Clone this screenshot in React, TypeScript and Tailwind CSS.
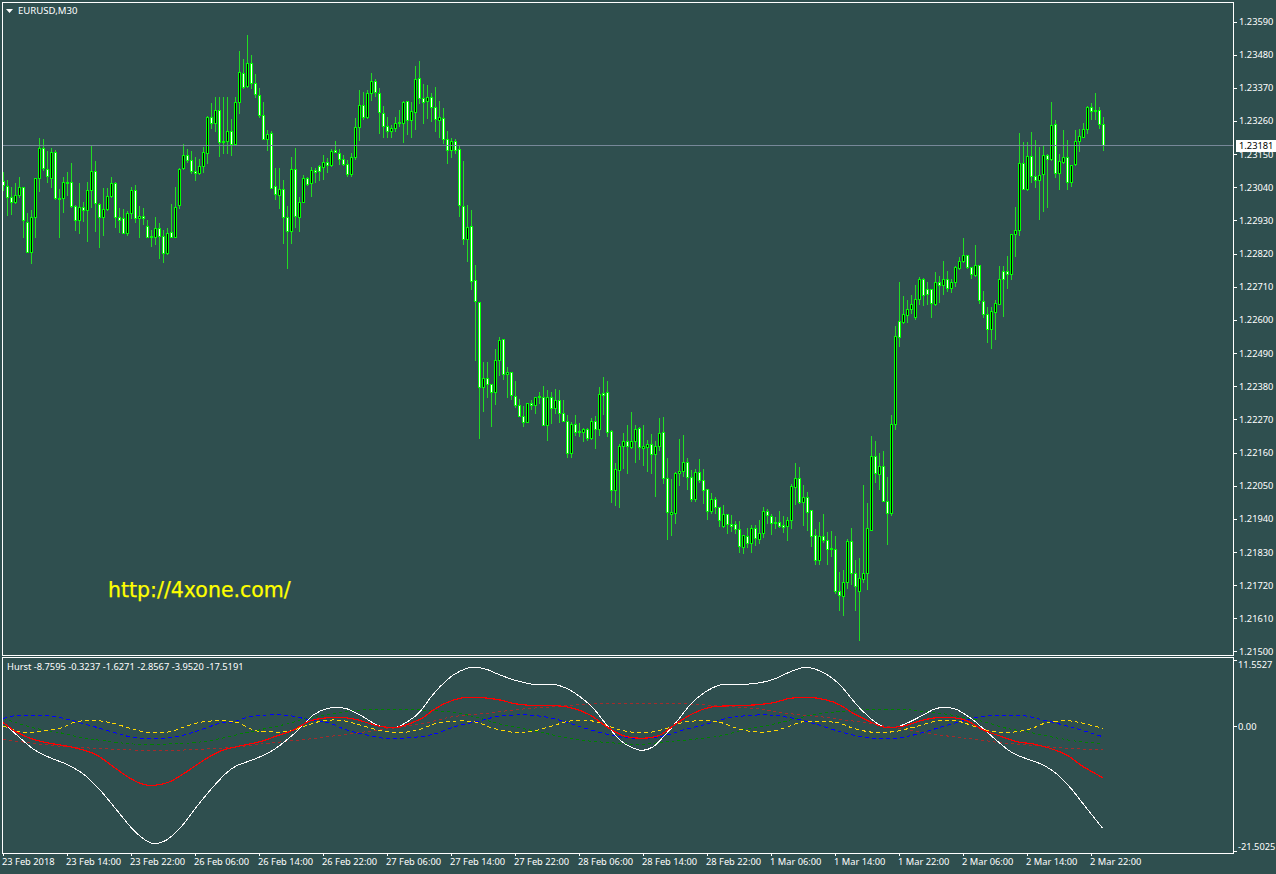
type Candle = [number, number, number, number, number];

// [wick top, wick bottom, body top, body bottom, 1 = rising], read at 3x, offset per group
const GROUP_A: Candle[] = [
  [515,570,543,555,0],[540,645,557,592,0],[560,642,592,607,0],[550,610,584,607,1],[532,590,562,584,1],
  [562,712,562,661,0],[640,757,665,755,0],[630,788,650,757,1],[535,710,535,650,1],[415,572,445,535,1],
  [417,510,445,505,0],[453,545,508,527,0],[445,560,457,535,1],[450,597,455,595,0],[568,712,595,597,0],
  [530,635,545,595,1],[517,585,545,548,0],[490,620,545,619,0],[615,690,617,661,0],[548,700,622,661,1],
  [605,662,620,631,0],[545,722,569,631,1],[437,620,512,569,1],[484,692,512,610,0],[610,740,612,652,0],
  [565,705,628,652,1],[565,630,589,628,1],[530,590,550,587,1],[547,680,548,652,0],[625,695,652,659,0],
  [628,700,655,700,0],[632,705,640,700,1],[560,655,569,640,1],[555,665,569,655,0],[618,710,647,655,1],
  [625,672,647,655,0],[660,710,677,710,0],[690,738,708,712,0],[652,732,683,712,1],[670,775,683,709,0],
  [690,785,709,760,0],[685,762,700,760,1],[612,712,697,712,0],[560,712,620,712,1],[505,625,508,616,1],
  [432,508,466,505,1],[447,485,466,481,0],[452,520,481,512,0],[470,540,512,518,0],[478,522,497,518,1],
  [440,515,455,497,1],[348,490,352,458,1],[308,385,352,370,0],[292,392,331,370,1],[292,467,331,427,0],
  [292,458,424,427,0],[292,458,394,424,1],[358,465,394,431,0],[292,433,307,433,1],[153,340,217,307,1],
  [178,265,220,260,0],[105,262,190,257,1],[165,265,190,248,0],[222,290,250,283,0],[265,350,284,346,0],
  [307,418,346,418,0],[390,450,403,418,1],[393,565,400,565,0],[505,597,559,581,0],[505,625,568,584,1],
  [540,728,568,652,0],[617,805,652,692,0],[470,728,508,692,1],[445,680,508,647,0],[590,692,607,650,1],
  [525,605,535,605,1],[530,555,535,553,0],[500,587,511,550,1],[505,547,511,515,0],[495,540,499,512,0],
];
const GROUP_B: Candle[] = [
  [345,416,367,380,1],[353,395,367,374,0],[327,378,334,374,1],[303,335,331,335,0],[327,372,340,356,0],
  [345,374,356,371,0],[360,408,371,401,0],[339,407,352,401,1],[235,357,262,352,1],[150,300,196,262,1],
  [156,237,196,232,0],[150,233,160,232,1],[98,180,124,160,1],[117,167,124,157,0],[145,278,160,217,0],
  [198,290,218,259,0],[232,290,259,272,0],[255,292,265,272,1],[232,272,250,265,1],[210,257,247,250,0],
  [183,305,187,248,1],[183,282,184,241,0],[187,290,214,241,1],[78,266,118,217,1],[63,188,115,175,0],
  [132,248,175,187,0],[135,233,172,184,1],[160,242,172,202,0],[140,272,202,238,0],[183,290,232,241,1],
  [205,308,235,296,0],[273,368,296,329,0],[295,350,304,329,1],[297,338,304,331,0],[318,527,328,496,0],
  [363,611,499,598,0],[495,662,562,598,1],[510,746,559,724,0],[675,960,721,784,0],
];
const GROUP_C: Candle[] = [
  [6,413,7,260,0],[187,332,235,260,1],[187,292,235,253,0],[253,377,253,277,0],[148,312,179,275,1],
  [111,224,121,179,1],[118,237,118,223,0],[202,292,217,223,1],[217,296,217,286,0],[244,322,287,314,0],
  [297,347,314,347,0],[318,378,347,365,0],[310,365,310,365,1],[300,327,310,314,0],[290,340,292,314,1],
  [277,310,289,292,0],[259,376,290,374,0],[271,419,292,374,1],[277,368,290,325,0],[267,340,301,325,1],
  [271,365,301,340,0],[300,362,340,362,0],[345,470,362,460,0],[365,470,373,460,1],[345,405,373,395,0],
  [370,408,393,396,0],[384,422,388,395,1],[385,420,388,413,0],[354,417,364,413,1],[348,445,364,386,0],
  [262,405,283,386,1],[232,342,280,285,0],[244,407,277,397,0],[390,605,394,571,0],[490,615,508,571,1],
  [432,620,439,511,1],[400,503,424,439,1],[376,518,424,439,0],[336,445,424,440,1],[376,485,388,424,1],
  [380,476,385,442,0],[375,495,439,445,1],[420,512,433,440,1],[403,518,431,463,0],[423,587,439,463,1],
  [354,450,400,439,1],[351,550,397,535,0],[475,716,535,637,0],[537,705,637,643,1],[515,668,520,640,1],
  [417,555,512,520,1],[405,528,485,512,1],[475,566,485,530,0],[510,603,530,598,0],[507,603,517,598,1],
  [477,545,517,541,0],[507,608,541,571,0],[568,656,568,634,0],[580,640,598,634,1],[590,640,598,622,0],
  [620,677,622,661,0],[615,680,643,679,1],[643,698,643,673,0],[645,692,673,677,0],[663,700,673,686,0],
  [663,755,688,739,0],[705,758,706,742,1],[685,740,707,730,0],[675,755,685,730,1],[675,735,685,715,0],
  [660,730,700,718,1],[622,712,634,700,1],[628,668,634,646,0],[643,701,649,668,0],[652,685,666,669,0],
  [633,680,667,677,0],[648,695,676,680,0],
];
const GROUP_D: Candle[] = [
  [472,540,481,497,1],[372,503,379,481,1],[310,431,355,382,1],[321,430,355,427,0],[375,495,412,425,1],
  [396,510,412,455,0],[450,558,451,529,0],[507,611,526,599,0],[487,611,529,599,1],[462,545,529,539,0],
  [517,611,539,566,0],[513,587,565,568,0],[528,698,568,692,0],[637,750,692,704,0],[630,765,667,707,1],
  [537,684,544,667,1],[504,672,544,640,0],[600,750,640,677,0],[595,840,655,692,1],[375,665,640,656,1],
  [430,687,505,640,1],[228,510,289,509,1],[243,366,289,338,0],[279,387,319,341,1],[273,423,319,422,0],
  [351,552,424,458,0],[165,465,193,458,1],
];
const GROUP_E: Candle[] = [
  [738,1047,769,1032,1],[606,797,724,772,0],[648,730,703,725,1],[660,727,688,704,1],[645,700,673,686,1],
  [615,717,658,710,1],[590,672,598,658,1],[594,675,598,646,0],[606,672,628,643,0],[630,710,628,668,0],
  [575,675,607,671,1],[588,665,607,616,0],[544,642,596,616,1],[573,632,596,625,0],[597,637,607,625,1],
  [558,617,562,607,1],[530,568,544,563,1],[475,545,526,542,1],[525,565,526,562,0],[562,595,562,583,0],
  [495,588,556,585,1],[555,668,556,661,0],[633,712,664,703,0],[682,786,703,748,0],[680,803,694,748,1],
  [660,776,670,697,1],[558,672,598,671,1],[558,708,574,598,0],[528,623,574,583,0],[462,597,463,583,1],
  [380,527,451,463,1],[160,465,250,451,1],[186,328,250,328,0],[186,330,229,328,1],[156,305,229,289,0],
  [180,320,289,301,0],[200,418,286,301,1],[196,392,226,283,1],[222,380,226,238,0],[66,240,136,238,1],
  [120,292,133,280,0],[222,326,244,280,1],[150,250,232,247,1],[180,326,232,307,0],[255,318,256,307,1],
  [150,255,184,253,1],[148,212,169,184,1],[128,170,148,170,1],[78,158,82,148,1],[70,118,82,92,0],
  [40,118,90,92,0],[80,143,91,133,0],[110,210,133,196,0],
];

const toScreen = (rows: Candle[], offset: number) =>
  rows.map((c) => ({
    hi: Math.round(offset + c[0] / 3),
    lo: Math.round(offset + c[1] / 3),
    top: Math.round(offset + c[2] / 3),
    bot: Math.round(offset + c[3] / 3),
    up: c[4] === 1,
  }));

const CANDLES = [
  ...toScreen(GROUP_A, 0),
  ...toScreen(GROUP_B, 40),
  ...toScreen(GROUP_C, 300),
  ...toScreen(GROUP_D, 360),
  ...toScreen(GROUP_E, 80),
];

const PRICES = [
  "1.23590","1.23480","1.23370","1.23260","1.23150","1.23040","1.22930","1.22820","1.22710","1.22600",
  "1.22490","1.22380","1.22270","1.22160","1.22050","1.21940","1.21830","1.21720","1.21610","1.21500",
];

const DATES = [
  "23 Feb 2018","23 Feb 14:00","23 Feb 22:00","26 Feb 06:00","26 Feb 14:00","26 Feb 22:00",
  "27 Feb 06:00","27 Feb 14:00","27 Feb 22:00","28 Feb 06:00","28 Feb 14:00","28 Feb 22:00",
  "1 Mar 06:00","1 Mar 14:00","1 Mar 22:00","2 Mar 06:00","2 Mar 14:00","2 Mar 22:00",
];

type Pt = [number, number];

// curve points come in three groups, one per 420px stretch of the indicator window
const join = (a: Pt[], b: Pt[], c: Pt[]): Pt[] => [
  ...a.map(([x, y]): Pt => [x / 3, 650 + y / 3]),
  ...b.slice(1).map(([x, y]): Pt => [420 + x / 3, 650 + y / 3]),
  ...c.slice(1).map(([x, y]): Pt => [840 + x / 3, 650 + y / 3]),
];

const WHITE = join(
  [[10,218],[50,255],[100,297],[150,323],[200,343],[250,372],[300,420],[350,480],[400,540],[440,573],[465,581],[500,570],[540,535],[590,470],[640,410],[680,368],[710,347],[770,325],[820,300],[860,270],[900,235],[940,195],[985,175],[1035,175],[1080,195],[1130,225],[1160,232],[1190,232],[1230,210],[1260,185]],
  [[0,185],[30,145],[60,110],[100,75],[140,55],[165,52],[200,58],[240,75],[290,92],[340,103],[400,103],[440,115],[480,140],[520,175],[560,225],[600,270],[630,290],[665,301],[700,290],[735,255],[770,215],[810,165],[850,130],[900,105],[960,103],[1010,100],[1060,88],[1100,70],[1140,55],[1165,52],[1200,63],[1230,80],[1260,105]],
  [[0,108],[30,140],[60,175],[100,212],[135,232],[165,232],[200,220],[250,195],[290,175],[340,175],[370,190],[400,210],[440,245],[480,280],[520,310],[570,330],[610,345],[650,372],[690,412],[730,462],[760,500],[788,535]],
);
const RED = join(
  [[10,218],[50,247],[100,268],[150,280],[200,288],[250,300],[290,315],[340,350],[390,385],[430,403],[465,406],[510,395],[560,365],[620,325],[670,300],[720,288],[780,275],[830,258],[880,240],[930,213],[985,203],[1035,203],[1075,210],[1130,227],[1165,232],[1200,230],[1260,208]],
  [[0,205],[40,180],[80,158],[130,143],[190,143],[240,150],[290,162],[350,167],[410,167],[460,175],[510,195],[560,230],[610,257],[665,265],[720,255],[770,220],[820,190],[870,172],[930,167],[1000,165],[1060,158],[1110,145],[1165,142],[1220,150],[1260,165]],
  [[0,168],[40,190],[90,215],[135,232],[190,228],[250,210],[290,203],[340,203],[380,212],[430,240],[480,258],[530,275],[580,282],[630,295],[680,315],[730,350],[788,383]],
);
const BLUE = join(
  [[10,205],[50,197],[140,197],[190,205],[240,218],[300,235],[350,250],[400,262],[470,266],[540,258],[600,240],[660,220],[700,215],[750,200],[800,195],[870,197],[930,210],[990,220],[1040,240],[1100,255],[1170,266],[1260,260]],
  [[0,260],[50,250],[110,228],[170,215],[230,200],[290,195],[350,197],[410,208],[480,230],[550,250],[610,262],[670,265],[730,258],[790,240],[850,225],[920,205],[980,197],[1050,195],[1120,205],[1180,220],[1260,245]],
  [[0,245],[50,257],[110,265],[180,263],[240,250],[300,232],[360,215],[420,200],[480,196],[550,197],[610,210],[670,225],[730,242],[788,260]],
);
const YELLOW = join(
  [[10,228],[50,243],[90,247],[130,243],[180,235],[230,215],[290,212],[340,220],[390,235],[440,247],[500,247],[550,232],[600,217],[660,212],[710,217],[760,240],[800,245],[860,245],[910,230],[970,212],[1030,212],[1090,228],[1150,243],[1210,247],[1260,238]],
  [[0,238],[50,220],[110,213],[170,217],[220,235],[280,247],[330,245],[390,230],[440,215],[490,210],[540,218],[590,237],[640,247],[690,247],[740,235],[790,217],[850,212],[900,217],[950,235],[1000,245],[1050,245],[1100,232],[1150,215],[1220,215],[1260,220]],
  [[0,220],[40,235],[100,247],[160,245],[220,232],[290,213],[350,213],[400,228],[450,243],[510,247],[570,237],[620,218],[680,212],[730,220],[788,235]],
);
const GREEN = join(
  [[10,205],[60,222],[120,238],[180,248],[240,262],[310,272],[400,282],[500,282],[580,278],[650,268],[730,250],[800,235],[860,222],[920,205],[980,195],[1060,182],[1130,178],[1260,180]],
  [[0,180],[60,183],[120,190],[180,205],[240,222],[320,238],[400,255],[480,270],[570,278],[660,283],[740,275],[820,268],[900,258],[970,240],[1050,225],[1120,208],[1200,190],[1260,185]],
  [[0,180],[80,178],[180,178],[240,183],[300,190],[350,198],[420,212],[500,235],[560,245],[640,262],[720,275],[788,280]],
);
const BROWN = join(
  [[10,268],[100,280],[200,290],[350,298],[470,302],[600,298],[700,292],[800,280],[900,270],[1000,258],[1100,245],[1260,222]],
  [[0,218],[100,200],[200,190],[300,178],[400,170],[500,163],[600,160],[700,160],[800,162],[900,168],[1000,175],[1100,190],[1200,200],[1260,208]],
  [[0,212],[90,220],[180,235],[260,250],[340,260],[420,270],[500,280],[600,288],[700,296],[788,299]],
);

// catmull-rom through the read points
function smooth(pts: Pt[]) {
  let d = `M${pts[0][0]} ${pts[0][1]}`;
  for (let i = 0; i < pts.length - 1; i++) {
    const p0 = pts[Math.max(i - 1, 0)];
    const p1 = pts[i];
    const p2 = pts[i + 1];
    const p3 = pts[Math.min(i + 2, pts.length - 1)];
    const c1x = p1[0] + (p2[0] - p0[0]) / 6;
    const c1y = p1[1] + (p2[1] - p0[1]) / 6;
    const c2x = p2[0] - (p3[0] - p1[0]) / 6;
    const c2y = p2[1] - (p3[1] - p1[1]) / 6;
    d += `C${c1x.toFixed(1)} ${c1y.toFixed(1)} ${c2x.toFixed(1)} ${c2y.toFixed(1)} ${p2[0].toFixed(1)} ${p2[1].toFixed(1)}`;
  }
  return d;
}

function CandleChart() {
  return (
    <svg className="block w-[1230px] h-[652px]" viewBox="3 3 1230 652" shapeRendering="crispEdges">
      {CANDLES.map((c, i) => {
        const x = 3 + 4 * i;
        const h = Math.max(c.bot - c.top + 1, 2);
        return (
          <g key={i}>
            <rect x={x} y={c.hi} width={1} height={c.lo - c.hi + 1} fill="#22dd22" />
            <rect x={x - 1} y={c.top} width={3} height={h} fill="#00ff00" />
            {h > 2 && <rect x={x} y={c.top + 1} width={1} height={h - 2} fill={c.up ? "#000000" : "#ffffff"} />}
          </g>
        );
      })}
      <rect x={3} y={145} width={1230} height={1} fill="#778899" />
    </svg>
  );
}

function HurstChart() {
  return (
    <svg className="block w-[1230px] h-[195px]" viewBox="3 658 1230 195" fill="none" shapeRendering="crispEdges">
      <path d={smooth(BROWN)} stroke="#a52a2a" strokeDasharray="3 3" />
      <path d={smooth(GREEN)} stroke="#008000" strokeDasharray="3 3" />
      <path d={smooth(BLUE)} stroke="#0000ff" strokeDasharray="4 3" />
      <path d={smooth(YELLOW)} stroke="#ffd700" strokeDasharray="4 3" />
      <path d={smooth(WHITE)} stroke="#ffffff" />
      <path d={smooth(RED)} stroke="#ff0000" strokeWidth={1.2} />
    </svg>
  );
}

export default function App() {
  return (
    <div className="w-[1276px] h-[874px] overflow-hidden bg-[#2f4f4f] text-white text-[9.3px] leading-[12px] font-['Noto_Sans',sans-serif]">
      <div className="flex h-[654px] mt-[2px] pl-[2px]">
        <div className="relative w-[1232px] h-[654px] border border-white overflow-hidden">
          <CandleChart />
          <div className="absolute left-[3px] top-[2px] flex items-center gap-[5px] text-[9.6px]">
            <svg width="7" height="4" viewBox="0 0 7 4" className="block">
              <path d="M0 0H7L3.5 4Z" fill="#ffffff" />
            </svg>
            EURUSD,M30
          </div>
          <div className="absolute left-[105px] top-[574px] text-[20.5px] leading-[26px] text-[#ffff00] font-['DejaVu_Sans',sans-serif] [-webkit-text-stroke:0.25px_#ffff00]">
            http://4xone.com/
          </div>
        </div>
        <div className="relative w-[42px] pt-[14px]">
          <div className="flex h-[642px] flex-col justify-between">
            {PRICES.map((p) => (
              <div key={p} className="flex h-[12px] items-center">
                <div className="w-[3px] h-px bg-white" />
                <div className="ml-[2px]">{p}</div>
              </div>
            ))}
          </div>
          <div className="absolute left-[2px] top-[138px] w-[40px] h-[12px] bg-white pl-[3px] text-black">1.23181</div>
        </div>
      </div>

      <div className="flex h-[197px] mt-px pl-[2px]">
        <div className="relative w-[1232px] h-[197px] border border-white overflow-hidden">
          <HurstChart />
          <div className="absolute left-[4px] top-[3px] whitespace-nowrap">Hurst -8.7595 -0.3237 -1.6271 -2.8567 -3.9520 -17.5191</div>
        </div>
        <div className="w-[42px]">
          <div className="flex h-[12px] mt-[2px] items-start">
            <div className="w-[3px] h-px mt-px bg-white" />
            <div className="ml-px">11.5527</div>
          </div>
          <div className="flex h-[12px] mt-[50px] items-start">
            <div className="w-[3px] h-px mt-[5px] bg-white" />
            <div className="ml-px">0.00</div>
          </div>
          <div className="flex h-[12px] mt-[108px] items-start">
            <div className="w-[3px] h-px mt-[10px] bg-white" />
            <div className="ml-px">-21.5025</div>
          </div>
        </div>
      </div>

      <div className="flex pl-[2px]">
        {DATES.map((d) => (
          <div key={d} className="w-[64px] shrink-0">
            <div className="ml-px w-px h-[2px] bg-white" />
            <div className="whitespace-nowrap">{d}</div>
          </div>
        ))}
      </div>
    </div>
  );
}
